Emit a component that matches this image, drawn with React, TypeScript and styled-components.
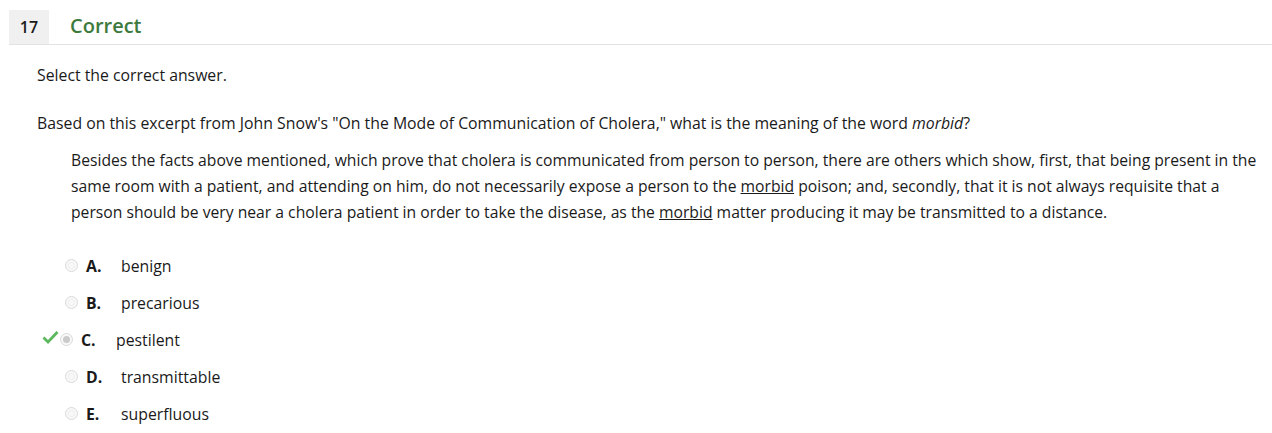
import React from "react";
import styled, { createGlobalStyle } from "styled-components";

const Global = createGlobalStyle`
  html, body { margin: 0; padding: 0; background: #fff; }
  body { font-family: "Open Sans", "Noto Sans", sans-serif; color: #1a1a1a; }
`;

const Page = styled.div`
  padding: 10px 0 0 9px;
  width: 1263px;
`;

const Header = styled.div`
  display: flex;
  align-items: center;
  height: 34px;
  border-bottom: 1px solid #e2e2e2;
`;

const Num = styled.div`
  width: 40px;
  height: 34px;
  background: #f0f0f0;
  display: flex;
  align-items: center;
  justify-content: center;
  font-size: 16px;
  font-weight: 600;
  color: #1a1a1a;
`;

const Status = styled.div`
  margin-left: 21px;
  font-size: 20px;
  font-weight: 600;
  color: #3d7a3d;
  margin-top: -3px;
`;

const Body = styled.div`
  padding: 19px 0 0 28px;
  font-size: 15.8px;
  line-height: 22px;
`;

const Para = styled.p`
  margin: 0 0 26px 0;
`;

const Question = styled.p`
  margin: 0 0 13px 0;
`;

const Passage = styled.div`
  margin: 0 0 0 34px;
  line-height: 26px;
  font-size: 15.7px;
`;

const U = styled.span`
  text-decoration: underline;
`;

const Options = styled.div`
  margin-top: 30px;
  display: flex;
  flex-direction: column;
  gap: 15px;
`;

const Row = styled.div<{ $marked?: boolean }>`
  display: flex;
  align-items: center;
  height: 22px;
  margin-left: ${(p) => (p.$marked ? "5px" : "28px")};
`;

const Check = styled.svg`
  width: 17px;
  height: 14px;
  margin-right: 1px;
  margin-top: -6px;
`;

const Radio = styled.span<{ $checked?: boolean }>`
  width: 11px;
  height: 11px;
  border-radius: 50%;
  border: 1px solid #dadada;
  background: #f8f8f8;
  position: relative;
  flex: none;
  margin-top: -2px;
  &::after {
    content: "";
    position: absolute;
    left: 2px;
    top: 2px;
    width: 7px;
    height: 7px;
    border-radius: 50%;
    background: ${(p) => (p.$checked ? "#cacaca" : "transparent")};
    box-shadow: ${(p) => (p.$checked ? "none" : "0 0 0 1px #efefef inset")};
  }
`;

const Letter = styled.span`
  font-weight: 700;
  width: 35px;
  margin-left: 8px;
  flex: none;
`;

const Text = styled.span``;

const options = [
  { l: "A.", t: "benign" },
  { l: "B.", t: "precarious" },
  { l: "C.", t: "pestilent", marked: true },
  { l: "D.", t: "transmittable" },
  { l: "E.", t: "superfluous" },
];

export default function App() {
  return (
    <>
      <Global />
      <Page>
        <Header>
          <Num>17</Num>
          <Status>Correct</Status>
        </Header>
        <Body>
          <Para>Select the correct answer.</Para>
          <Question>
            Based on this excerpt from John Snow's "On the Mode of Communication of Cholera," what is the meaning of the word <i>morbid</i>?
          </Question>
          <Passage>
            Besides the facts above mentioned, which prove that cholera is communicated from person to person, there are others which show, first, that being present in the same room with a patient, and attending on him, do not necessarily expose a person to the <U>morbid</U> poison; and, secondly, that it is not always requisite that a person should be very near a cholera patient in order to take the disease, as the <U>morbid</U> matter producing it may be transmitted to a distance.
          </Passage>
          <Options>
            {options.map((o) => (
              <Row key={o.l} $marked={o.marked}>
                {o.marked && (
                  <Check viewBox="0 0 17 14">
                    <path d="M1.5 7.5 L6 12 L15.5 2" fill="none" stroke="#5cb85c" strokeWidth="2.8" />
                  </Check>
                )}
                <Radio $checked={o.marked} />
                <Letter>{o.l}</Letter>
                <Text>{o.t}</Text>
              </Row>
            ))}
          </Options>
        </Body>
      </Page>
    </>
  );
}
